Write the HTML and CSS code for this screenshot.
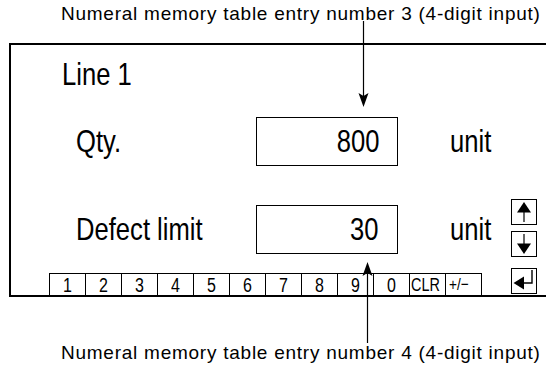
FILE: index.html
```html
<!DOCTYPE html>
<html>
    <head>
        <title>Line 1 entry screen</title>
        <link rel="stylesheet" href="styles.css">
    </head>
    <body>
        <p class="note note-top">Numeral memory table entry number 3 (4-digit input)</p>
        <div class="panel">
            <div class="title"><span class="cond">Line 1</span></div>
            <div class="row">
                <span class="label"><span class="cond">Qty.</span></span>
                <span class="field"><span class="cond">800</span></span>
                <span class="unit"><span class="cond">unit</span></span>
            </div>
            <div class="row row-defect">
                <span class="label"><span class="cond">Defect limit</span></span>
                <span class="field"><span class="cond">30</span></span>
                <span class="unit"><span class="cond">unit</span></span>
                <div class="scroll">
                    <span class="btn">
                        <svg viewBox="0 0 24 24" width="24" height="24"><path d="M12 2 L19 12.5 L5 12.5 Z" fill="#000"/><path d="M12 11 V22" stroke="#000" stroke-width="1.2"/></svg>
                    </span>
                    <span class="btn">
                        <svg viewBox="0 0 24 24" width="24" height="24"><path d="M12 2 V13" stroke="#000" stroke-width="1.2"/><path d="M5 11.5 L19 11.5 L12 22 Z" fill="#000"/></svg>
                    </span>
                </div>
            </div>
            <div class="bottom">
                <div class="keys">
                    <span class="key"><span class="cond">1</span></span>
                    <span class="key"><span class="cond">2</span></span>
                    <span class="key"><span class="cond">3</span></span>
                    <span class="key"><span class="cond">4</span></span>
                    <span class="key"><span class="cond">5</span></span>
                    <span class="key"><span class="cond">6</span></span>
                    <span class="key"><span class="cond">7</span></span>
                    <span class="key"><span class="cond">8</span></span>
                    <span class="key"><span class="cond">9</span></span>
                    <span class="key"><span class="cond">0</span></span>
                    <span class="key key-clr"><span class="cond">CLR</span></span>
                    <span class="key key-sign"><span class="cond">+/&minus;</span></span>
                </div>
                <span class="btn enter">
                    <svg viewBox="0 0 24 24" width="24" height="24"><path d="M20 1 V14 H10" fill="none" stroke="#000" stroke-width="1.4"/><path d="M1.5 14 L12 7.5 L12 20.5 Z" fill="#000"/></svg>
                </span>
            </div>
        </div>
        <p class="note note-bottom">Numeral memory table entry number 4 (4-digit input)</p>

        <!-- callout arrows drawn over the panel -->
        <svg class="callouts" width="546" height="369">
            <path d="M363.5 21 V100" stroke="#000" stroke-width="1.2"/>
            <path d="M363.5 107 L358.5 93 L363.5 96 L368.5 93 Z" fill="#000"/>
            <path d="M367.5 270 V343" stroke="#000" stroke-width="1.2"/>
            <path d="M367.5 262 L362.5 276 L367.5 273 L372.5 276 Z" fill="#000"/>
        </svg>
    </body>
</html>
```

FILE: styles.css
```css
body {
    margin: 0;
    width: 546px;
    height: 369px;
    overflow: hidden;
    position: relative;
    background: #fff;
    color: #000;
    font-family: "Liberation Sans", Arial, sans-serif;
}

.note {
    margin: 0;
    padding-left: 61px;
    font-size: 19px;
    letter-spacing: 0.75px;
    line-height: 22px;
    white-space: nowrap;
}

.note-top {
    padding-top: 3px;
    height: 43px;
    box-sizing: border-box;
}

.note-bottom {
    padding-top: 45px;
}

/* the panel font is a narrow grotesque: squeeze the text */
.cond {
    display: inline-block;
    transform: scaleX(0.8);
    transform-origin: left center;
}

.panel {
    margin-left: 9px;
    width: 600px;
    height: 254px;
    box-sizing: border-box;
    border: 2px solid #000;
    border-right: none;
    display: flex;
    flex-direction: column;
}

.title {
    padding: 13px 0 0 51px;
    font-size: 32px;
    line-height: 32px;
    height: 72px;
    box-sizing: border-box;
}

.row {
    display: flex;
    align-items: center;
    height: 49px;
    padding-left: 65px;
    font-size: 32px;
}

.row-defect {
    margin-top: 39px;
}

.label {
    width: 180px;
}

.field {
    width: 142px;
    height: 49px;
    box-sizing: border-box;
    border: 1px solid #000;
    text-align: right;
    padding-right: 18px;
    line-height: 47px;
}

.field .cond {
    transform-origin: right center;
}

.unit {
    margin-left: 52px;
    width: 61px;
}

.scroll {
    display: flex;
    flex-direction: column;
    gap: 6px;
    align-self: flex-start;
    margin-top: -6px;
}

.btn {
    display: flex;
    width: 26px;
    height: 26px;
    box-sizing: border-box;
    border: 1px solid #000;
    align-items: center;
    justify-content: center;
}

.bottom {
    margin-top: auto;
    display: flex;
    align-items: flex-end;
}

.keys {
    display: flex;
    margin-left: 38px;
    height: 22px;
}

.key {
    width: 36px;
    box-sizing: border-box;
    border: 1px solid #000;
    border-bottom: none;
    border-right: none;
    text-align: center;
    font-size: 20px;
    line-height: 22px;
}

.key .cond {
    transform-origin: center;
}

.key:last-child {
    width: 37px;
    border-right: 1px solid #000;
}

.key-clr {
    font-size: 18px;
    text-align: left;
    padding-left: 1px;
}

.key-clr .cond,
.key-sign .cond {
    transform-origin: left center;
}

.key-sign {
    font-size: 17px;
    text-align: left;
    padding-left: 3px;
}

.enter {
    margin-left: 29px;
    margin-bottom: 1px;
}

.callouts {
    position: absolute;
    left: 0;
    top: 0;
    pointer-events: none;
}
```
